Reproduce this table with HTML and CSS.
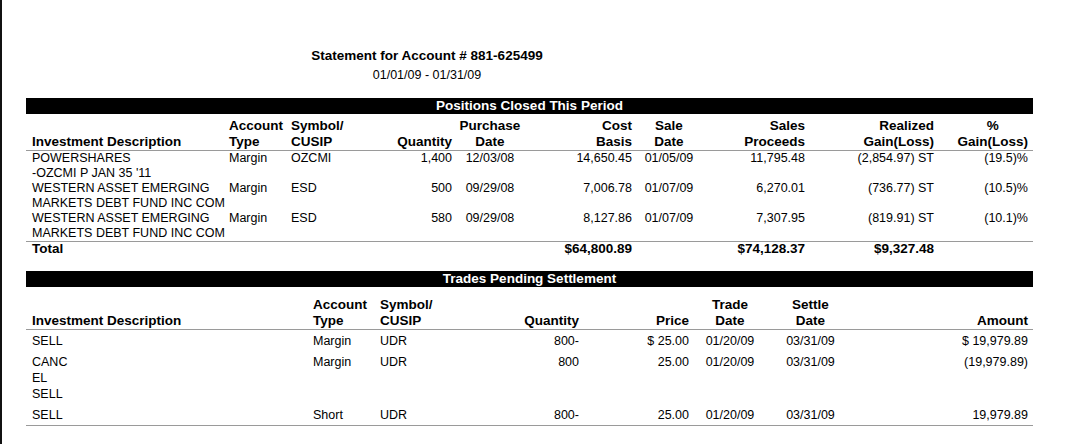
FILE: index.html
```html
<!DOCTYPE html>
<html lang="en">
<head>
<meta charset="utf-8">
<title>Statement for Account # 881-625499</title>
<link rel="stylesheet" href="styles.css">
</head>
<body>
<div class="page">
  <header class="stmt-head">
    <div class="title">Statement for Account # 881-625499</div>
    <div class="period">01/01/09 - 01/31/09</div>
  </header>

  <section class="block closed-block">
    <div class="bar">Positions Closed This Period</div>
    <div class="tbl t1">
      <div class="row hrow">
        <div class="desc">Investment Description</div>
        <div class="l">Account<br>Type</div>
        <div class="l">Symbol/<br>CUSIP</div>
        <div class="r">Quantity</div>
        <div class="c">Purchase<br>Date</div>
        <div class="r">Cost<br>Basis</div>
        <div class="c">Sale<br>Date</div>
        <div class="r">Sales<br>Proceeds</div>
        <div class="r">Realized<br>Gain(Loss)</div>
        <div class="r"><span class="stack">%<br>Gain(Loss)</span></div>
      </div>
      <div class="row drow">
        <div class="desc">POWERSHARES<br>-OZCMI P JAN 35 '11</div>
        <div class="l">Margin</div>
        <div class="l">OZCMI</div>
        <div class="r">1,400</div>
        <div class="c">12/03/08</div>
        <div class="r">14,650.45</div>
        <div class="c">01/05/09</div>
        <div class="r">11,795.48</div>
        <div class="r">(2,854.97) ST</div>
        <div class="r">(19.5)%</div>
      </div>
      <div class="row drow">
        <div class="desc">WESTERN ASSET EMERGING<br>MARKETS DEBT FUND INC COM</div>
        <div class="l">Margin</div>
        <div class="l">ESD</div>
        <div class="r">500</div>
        <div class="c">09/29/08</div>
        <div class="r">7,006.78</div>
        <div class="c">01/07/09</div>
        <div class="r">6,270.01</div>
        <div class="r">(736.77) ST</div>
        <div class="r">(10.5)%</div>
      </div>
      <div class="row drow last">
        <div class="desc">WESTERN ASSET EMERGING<br>MARKETS DEBT FUND INC COM</div>
        <div class="l">Margin</div>
        <div class="l">ESD</div>
        <div class="r">580</div>
        <div class="c">09/29/08</div>
        <div class="r">8,127.86</div>
        <div class="c">01/07/09</div>
        <div class="r">7,307.95</div>
        <div class="r">(819.91) ST</div>
        <div class="r">(10.1)%</div>
      </div>
      <div class="row trow">
        <div class="desc">Total</div>
        <div></div>
        <div></div>
        <div></div>
        <div></div>
        <div class="r">$64,800.89</div>
        <div></div>
        <div class="r">$74,128.37</div>
        <div class="r">$9,327.48</div>
        <div></div>
      </div>
    </div>
  </section>

  <section class="block pending-block">
    <div class="bar">Trades Pending Settlement</div>
    <div class="tbl t2">
      <div class="row hrow">
        <div class="desc">Investment Description</div>
        <div class="l">Account<br>Type</div>
        <div class="l">Symbol/<br>CUSIP</div>
        <div class="r">Quantity</div>
        <div class="r">Price</div>
        <div class="c">Trade<br>Date</div>
        <div class="c">Settle<br>Date</div>
        <div class="r">Amount</div>
      </div>
      <div class="row drow">
        <div class="desc">SELL</div>
        <div class="l">Margin</div>
        <div class="l">UDR</div>
        <div class="r">800-</div>
        <div class="r">$ 25.00</div>
        <div class="c">01/20/09</div>
        <div class="c">03/31/09</div>
        <div class="r">$ 19,979.89</div>
      </div>
      <div class="row drow">
        <div class="desc">CANC<br>EL<br>SELL</div>
        <div class="l">Margin</div>
        <div class="l">UDR</div>
        <div class="r">800</div>
        <div class="r">25.00</div>
        <div class="c">01/20/09</div>
        <div class="c">03/31/09</div>
        <div class="r">(19,979.89)</div>
      </div>
      <div class="row drow last">
        <div class="desc">SELL</div>
        <div class="l">Short</div>
        <div class="l">UDR</div>
        <div class="r">800-</div>
        <div class="r">25.00</div>
        <div class="c">01/20/09</div>
        <div class="c">03/31/09</div>
        <div class="r">19,979.89</div>
      </div>
    </div>
  </section>
</div>
</body>
</html>
```

FILE: styles.css
```css
html, body {
  margin: 0;
  padding: 0;
  background: #fff;
}

body {
  font-family: "Liberation Sans", Arial, Helvetica, sans-serif;
  color: #000;
}

.page {
  box-sizing: border-box;
  min-height: 444px;
  border-left: 2px solid #111;
  padding: 48px 0 0 24px;
}

.stmt-head {
  width: 802px;
  text-align: center;
}

.title {
  font-weight: bold;
  font-size: 13.5px;
  line-height: 16px;
}

.period {
  font-size: 12.5px;
  line-height: 16px;
  margin-top: 3px;
}

.block {
  width: 1007px;
}

.closed-block {
  margin-top: 15px;
}

.pending-block {
  margin-top: 16px;
}

.bar {
  background: #000;
  color: #fff;
  font-weight: bold;
  font-size: 13.5px;
  line-height: 16px;
  height: 16px;
  text-align: center;
}

.tbl {
  width: 1007px;
}

.t1 {
  margin-top: 4px;
}

.t2 {
  margin-top: 10px;
}

.row {
  display: grid;
  white-space: nowrap;
}

.t1 .row {
  grid-template-columns: 203px 62px 89px 72px 76px 104px 74px 99px 129px 94px;
}

.t2 .row {
  grid-template-columns: 287px 67px 120px 79px 110px 82px 79px 178px;
}

.hrow {
  font-weight: bold;
  font-size: 13.5px;
  line-height: 16px;
  align-items: end;
  border-bottom: 1px solid #9a9a9a;
}

.drow {
  font-size: 12.5px;
  align-items: start;
}

.t1 .drow {
  line-height: 15px;
}

.t2 .drow {
  line-height: 16px;
  padding: 3px 0 2px;
}

.drow.last {
  border-bottom: 1px solid #9a9a9a;
}

.trow {
  font-weight: bold;
  font-size: 13.5px;
  line-height: 13px;
}

.desc {
  padding-left: 6px;
  text-align: left;
}

.l { text-align: left; }
.r { text-align: right; }
.c { text-align: center; }

.stack {
  display: inline-block;
  text-align: center;
}
```
